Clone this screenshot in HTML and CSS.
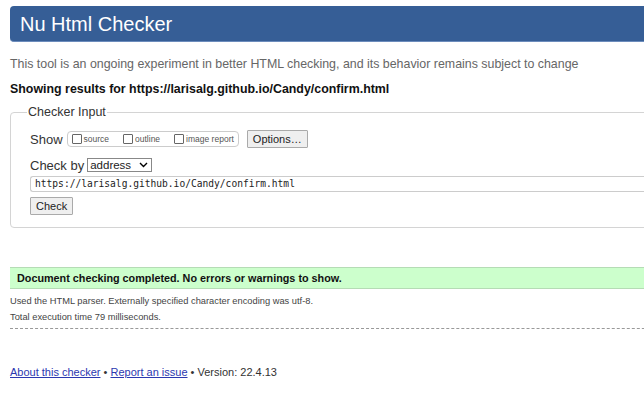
FILE: index.html
```html
<!DOCTYPE html>
<html>
<head>
<meta charset="utf-8">
<link rel="stylesheet" href="styles.css">
</head>
<body>
<div class="page">
  <h1 class="header">Nu Html Checker</h1>
  <p class="intro">This tool is an ongoing experiment in better HTML checking, and its behavior remains subject to change</p>
  <p class="showing">Showing results for https://larisalg.github.io/Candy/confirm.html</p>
  <fieldset class="input">
    <legend>Checker Input</legend>
    <div class="row show">
      <span class="label">Show</span>
      <span class="opts">
        <label><span class="cb"></span>source</label>
        <label><span class="cb"></span>outline</label>
        <label><span class="cb"></span>image report</label>
      </span>
      <span class="btn">Options…</span>
    </div>
    <div class="row by">
      <span class="label">Check by</span>
      <span class="select">address<svg width="9" height="6" viewBox="0 0 9 6"><path d="M1 1l3.5 3.5L8 1" fill="none" stroke="#000" stroke-width="1.4"/></svg></span>
    </div>
    <div class="url">https://larisalg.github.io/Candy/confirm.html</div>
    <div class="row submit"><span class="btn check">Check</span></div>
  </fieldset>
  <p class="success">Document checking completed. No errors or warnings to show.</p>
  <p class="details">Used the HTML parser. Externally specified character encoding was utf-8.</p>
  <p class="details">Total execution time 79 milliseconds.</p>
  <hr class="sep">
  <p class="footer"><a href="#">About this checker</a> • <a href="#">Report an issue</a> • Version: 22.4.13</p>
</div>
</body>
</html>
```
FILE: styles.css
```css
html, body { margin: 0; padding: 0; overflow: hidden; background: #fff; }
body { font-family: "Liberation Sans", Arial, sans-serif; color: #222; }
.page { width: 700px; padding: 6px 0 0 10px; box-sizing: border-box; }
.header {
  margin: 0; height: 36px; box-sizing: border-box;
  background: #365e96; color: #fff; border-radius: 4px 0 0 4px;
  border-bottom: 1px solid #6c8cbc;
  font-weight: normal; font-size: 20px; line-height: 36px; padding-left: 10px;
}
.intro { margin: 14px 0 0; font-size: 12.4px; color: #666; line-height: 16px; }
.showing { margin: 9px 0 0; font-size: 12.4px; font-weight: bold; color: #111; line-height: 16px; }
.input {
  margin: 8px 0 0; padding: 11px 0 12px 19px; border: 1px solid #d4d4d4; border-radius: 4px;
  min-width: 0;
}
.input legend { font-size: 12.5px; color: #333; padding: 0 1px; margin-left: -3px; line-height: 14px; }
.row { display: flex; align-items: center; font-size: 13px; color: #333; }
.show { height: 18px; }
.label { margin-right: 4px; }
.opts {
  display: inline-flex; align-items: center; height: 16px; box-sizing: border-box;
  border: 1px solid #ccc; border-radius: 4px; padding: 0 4px; font-size: 8.5px; color: #555;
}
.opts label { display: inline-flex; align-items: center; margin-right: 14px; }
.opts label:last-child { margin-right: 0; }
.cb { width: 8px; height: 8px; border: 1px solid #666; border-radius: 1px; margin-right: 2px; background: #fff; }
.btn {
  display: inline-block; border: 1px solid #aaa; background: #efefef; border-radius: 1px;
  font-size: 11px; padding: 2px 5px; line-height: 12px; color: #222; margin-left: 8px;
}
.show .btn { height: 18px; box-sizing: border-box; }
.check { margin-left: 0; height: 18px; box-sizing: border-box; }
.by { margin-top: 10px; height: 14px; }
.select {
  display: inline-flex; align-items: center; justify-content: space-between;
  width: 65px; height: 14px; box-sizing: border-box; border: 1px solid #888;
  font-size: 11.5px; padding: 0 3px 0 2px; color: #222; margin-left: -1px; background: #fff;
}
.url {
  margin-top: 4px; height: 16px; box-sizing: border-box; border: 1px solid #ccc; border-right: none;
  border-radius: 3px 0 0 3px; font-family: "DejaVu Sans Mono", "Liberation Mono", monospace;
  font-size: 9.6px; line-height: 14px; padding-left: 4px; color: #222;
}
.submit { margin-top: 5px; }
.success {
  margin: 39px 0 0; height: 22px; box-sizing: border-box; background: #ccffcc;
  border-top: 1px solid #b5dcb5; border-bottom: 1px solid #b5dcb5;
  font-weight: bold; font-size: 10.8px; line-height: 20px; padding-left: 7px; color: #111;
}
.details { margin: 7px 0 0; font-size: 9.3px; color: #444; line-height: 11px; }
.details + .details { margin-top: 5px; }
.sep { margin: 5px 0 0; border: none; border-top: 1px dashed #999; height: 0; }
.footer { margin: 37px 0 0; font-size: 11px; color: #333; }
.footer a { color: #2b38b0; }
```
